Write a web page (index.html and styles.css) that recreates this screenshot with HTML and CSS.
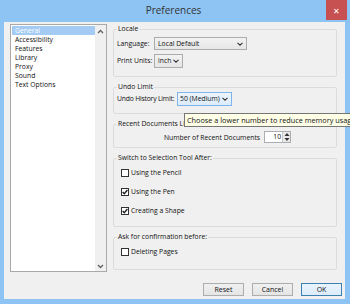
FILE: index.html
```html
<!DOCTYPE html>
<html lang="en">
<head>
    <meta charset="UTF-8">
    <title>Preferences</title>
    <link rel="stylesheet" href="styles.css">
</head>
<body>

    <div class="window">
        <div class="titlebar">
            <span class="title">Preferences</span>
            <span class="close">&#x2715;</span>
        </div>

        <div class="client">
            <div class="main">
                <!-- Lista de categorias -->
                <div class="listbox">
                    <ul class="list-items">
                        <li class="selected">General</li>
                        <li>Accessibility</li>
                        <li>Features</li>
                        <li>Library</li>
                        <li>Proxy</li>
                        <li>Sound</li>
                        <li>Text Options</li>
                    </ul>
                    <div class="scrollbar">
                        <svg width="7" height="5" viewBox="0 0 7 5"><path d="M1 4 L3.5 1.5 L6 4" fill="none" stroke="#606060" stroke-width="1.3"/></svg>
                        <svg width="7" height="5" viewBox="0 0 7 5"><path d="M1 1 L3.5 3.5 L6 1" fill="none" stroke="#606060" stroke-width="1.3"/></svg>
                    </div>
                </div>

                <!-- Painel de opções -->
                <div class="panel">
                    <fieldset class="group group-locale">
                        <legend>Locale</legend>
                        <div class="field-row">
                            <span class="field-label">Language:</span>
                            <span class="combo combo-language">Local Default
                                <svg width="6" height="4" viewBox="0 0 6 4"><path d="M0.5 0.8 L3 3.2 L5.5 0.8" fill="none" stroke="#333" stroke-width="1.1"/></svg>
                            </span>
                        </div>
                        <div class="field-row">
                            <span class="field-label">Print Units:</span>
                            <span class="combo combo-units">inch
                                <svg width="6" height="4" viewBox="0 0 6 4"><path d="M0.5 0.8 L3 3.2 L5.5 0.8" fill="none" stroke="#333" stroke-width="1.1"/></svg>
                            </span>
                        </div>
                    </fieldset>

                    <fieldset class="group group-undo">
                        <legend>Undo Limit</legend>
                        <div class="field-row">
                            <span class="undo-label">Undo History Limit:</span>
                            <span class="combo combo-undo">50 (Medium)
                                <svg width="6" height="4" viewBox="0 0 6 4"><path d="M0.5 0.8 L3 3.2 L5.5 0.8" fill="none" stroke="#333" stroke-width="1.1"/></svg>
                            </span>
                        </div>
                    </fieldset>

                    <fieldset class="group group-recent">
                        <legend>Recent Documents Limit</legend>
                        <div class="field-row recent-row">
                            <span class="recent-label">Number of Recent Documents</span>
                            <span class="spinner">
                                <span class="spinner-value">10</span>
                                <span class="spinner-btns">
                                    <svg width="6" height="5" viewBox="0 0 6 5"><path d="M0.5 4 L3 1 L5.5 4 Z" fill="#333"/></svg>
                                    <svg width="6" height="5" viewBox="0 0 6 5"><path d="M0.5 1 L3 4 L5.5 1 Z" fill="#333"/></svg>
                                </span>
                            </span>
                        </div>
                    </fieldset>

                    <fieldset class="group group-switch">
                        <legend>Switch to Selection Tool After:</legend>
                        <div class="check-row">
                            <span class="checkbox"></span>
                            <span>Using the Pencil</span>
                        </div>
                        <div class="check-row">
                            <span class="checkbox">
                                <svg width="6" height="6" viewBox="0 0 6 6"><path d="M0.6 3.1 L2.3 4.8 L5.4 1" fill="none" stroke="#222" stroke-width="1.4"/></svg>
                            </span>
                            <span>Using the Pen</span>
                        </div>
                        <div class="check-row">
                            <span class="checkbox">
                                <svg width="6" height="6" viewBox="0 0 6 6"><path d="M0.6 3.1 L2.3 4.8 L5.4 1" fill="none" stroke="#222" stroke-width="1.4"/></svg>
                            </span>
                            <span>Creating a Shape</span>
                        </div>
                    </fieldset>

                    <fieldset class="group group-ask">
                        <legend>Ask for confirmation before:</legend>
                        <div class="check-row">
                            <span class="checkbox"></span>
                            <span>Deleting Pages</span>
                        </div>
                    </fieldset>
                </div>
            </div>

            <div class="buttons">
                <button class="btn">Reset</button>
                <button class="btn">Cancel</button>
                <button class="btn btn-default">OK</button>
            </div>
        </div>

        <div class="tooltip">Choose a lower number to reduce memory usage</div>
    </div>

</body>
</html>
```

FILE: styles.css
```css
/* Resetando margens e paddings */
* {
    margin: 0;
    padding: 0;
    box-sizing: border-box;
}

body {
    width: 350px;
    height: 304px;
    overflow: hidden;
    font-family: "Open Sans", "Noto Sans", sans-serif;
    font-size: 6.8px;
    color: #111;
}

.window {
    position: relative;
    width: 350px;
    height: 304px;
    overflow: hidden;
    background-color: #8ec4f3;
    display: flex;
    flex-direction: column;
}

/* Barra de titulo */
.titlebar {
    height: 22px;
    display: grid;
    grid-template-columns: 1fr auto 1fr;
    align-items: start;
    padding-right: 3px;
}

.title {
    grid-column: 2;
    font-size: 10px;
    line-height: 20px;
    color: #333;
}

.close {
    grid-column: 3;
    justify-self: end;
    width: 21px;
    height: 20px;
    background-color: #c75050;
    color: white;
    font-size: 8px;
    display: flex;
    align-items: center;
    justify-content: center;
}

/* Area do cliente */
.client {
    flex: 1;
    margin: 0 5px 5px 4px;
    background-color: #f0f0f0;
    display: flex;
    flex-direction: column;
}

.main {
    display: flex;
    padding: 2px 0 0 6px;
}

.listbox {
    width: 97px;
    height: 248px;
    border: 1px solid #a9a9a9;
    background-color: white;
    display: flex;
}

.list-items {
    flex: 1;
    list-style: none;
    padding: 1px 0 0 1px;
}

.list-items li {
    height: 9px;
    line-height: 9px;
    padding-left: 3px;
}

.list-items li.selected {
    background-color: #a3cbf3;
    color: white;
}

.scrollbar {
    width: 11px;
    background-color: #f0f0f0;
    display: flex;
    flex-direction: column;
    justify-content: space-between;
    align-items: center;
    padding: 4px 0 2px;
}

/* Painel de opcoes */
.panel {
    width: 224px;
    margin-left: 6px;
    display: flex;
    flex-direction: column;
    gap: 5px;
}

.group {
    border: 1px solid #dcdcdc;
    border-radius: 2px;
    padding: 0 3px;
}

.group legend {
    padding: 0 1px;
    line-height: 10px;
    white-space: nowrap;
}

.group-locale {
    padding-top: 3px;
    padding-bottom: 9px;
}

.group-locale .field-row + .field-row {
    margin-top: 4px;
}

.group-undo {
    padding-bottom: 8px;
}

.group-recent {
    padding-top: 2px;
    padding-bottom: 4px;
}

.group-switch {
    padding-bottom: 6px;
}

.group-ask {
    padding-bottom: 8px;
}

.field-row {
    display: flex;
    align-items: center;
    height: 13px;
    white-space: nowrap;
}

.field-label {
    width: 37px;
    flex-shrink: 0;
}

.undo-label {
    width: 60px;
    flex-shrink: 0;
    letter-spacing: -0.2px;
}

.combo {
    flex-shrink: 0;
    height: 13px;
    border: 1px solid #acacac;
    background: linear-gradient(#f2f2f2, #e6e6e6);
    display: flex;
    align-items: center;
    justify-content: space-between;
    gap: 2px;
    padding: 0 3px 0 3px;
    white-space: nowrap;
}

.combo svg {
    flex-shrink: 0;
}

.combo-language {
    width: 93px;
}

.combo-units {
    width: 29px;
    height: 14px;
}

.combo-undo {
    width: 55px;
    height: 14px;
    padding-left: 2px;
    border-color: #7eb4ea;
    background: linear-gradient(#edf5fd, #dcecfc);
}

.recent-row {
    height: 12px;
}

.recent-label {
    margin-left: 47px;
    margin-right: 4px;
}

.spinner {
    flex-shrink: 0;
    width: 27px;
    height: 12px;
    border: 1px solid #abadb3;
    background-color: white;
    display: flex;
}

.spinner-value {
    flex: 1;
    text-align: right;
    line-height: 10px;
    padding-right: 1px;
}

.spinner-btns {
    width: 8px;
    background-color: #e8e8e8;
    border-left: 1px solid #c8c8c8;
    display: flex;
    flex-direction: column;
    align-items: center;
    justify-content: space-around;
}

.check-row {
    height: 19px;
    display: flex;
    align-items: center;
    gap: 2px;
    padding-left: 4px;
}

.checkbox {
    width: 8px;
    height: 8px;
    border: 1px solid #333;
    background-color: white;
    display: flex;
    align-items: center;
    justify-content: center;
}

/* Botoes */
.buttons {
    display: flex;
    justify-content: flex-end;
    gap: 8px;
    padding: 11px 3px 0 0;
}

.btn {
    width: 41px;
    height: 13px;
    border: 1px solid #adadad;
    background: linear-gradient(#f0f0f0, #e5e5e5);
    font-family: "Open Sans", "Noto Sans", sans-serif;
    font-size: 7px;
    color: #111;
}

.btn-default {
    border-color: #3c7fb1;
    background: linear-gradient(#eaf4fc, #dcecfc);
}

/* Dica */
.tooltip {
    position: absolute;
    left: 184px;
    top: 113px;
    height: 14px;
    padding: 0 2px;
    border: 1px solid #767676;
    background-color: #ffffe8;
    line-height: 12px;
    white-space: nowrap;
    font-size: 7.3px;
}
```
